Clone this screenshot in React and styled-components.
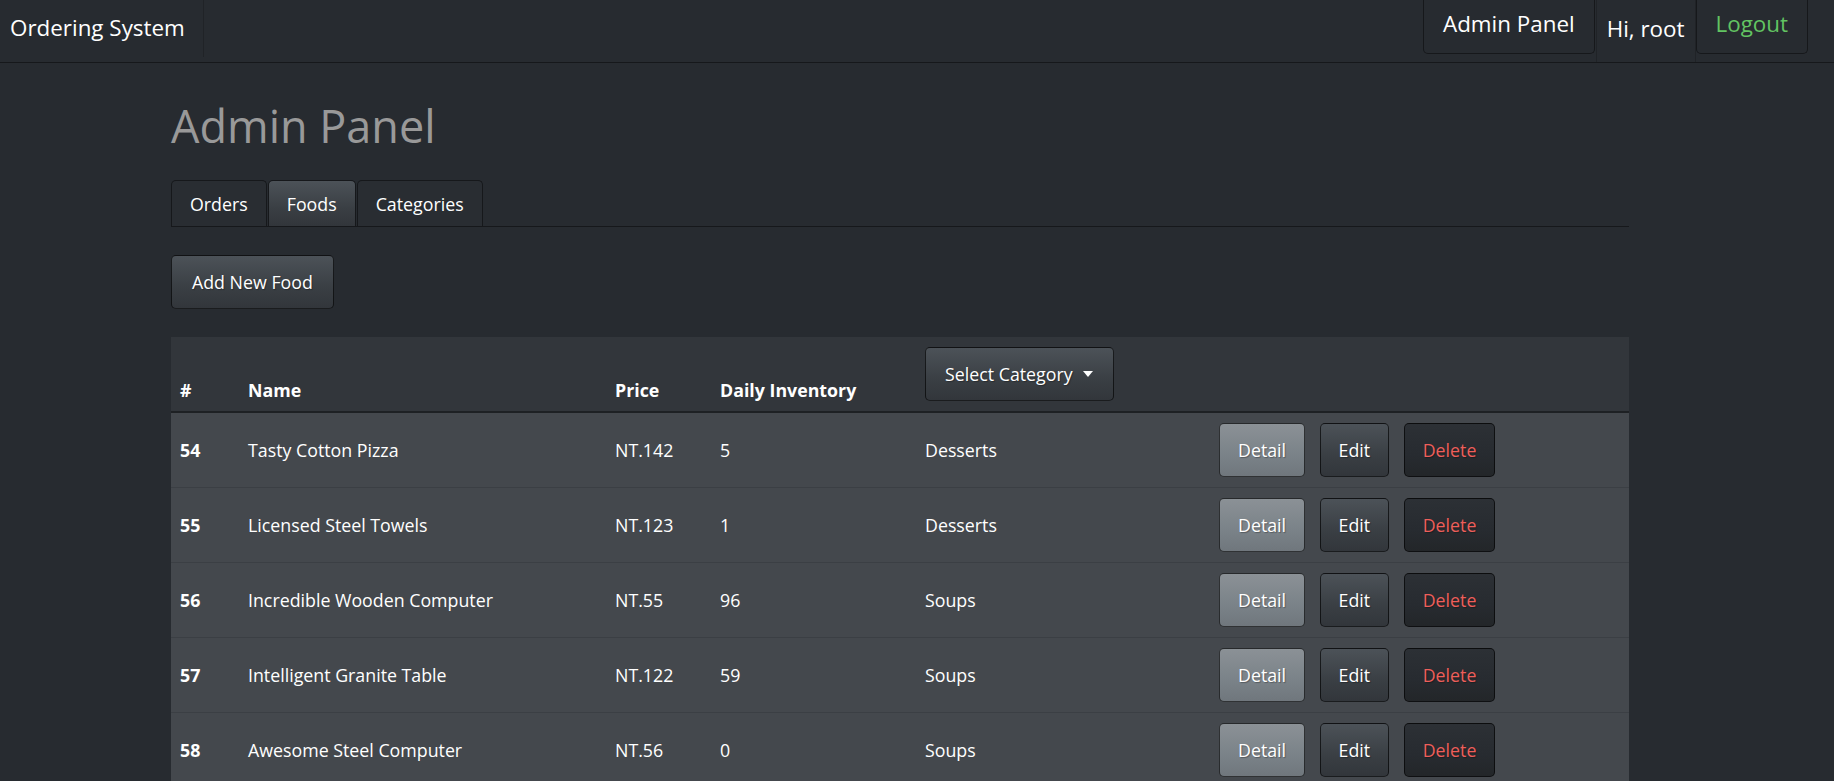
import React from "react";
import styled, { createGlobalStyle, css } from "styled-components";

const GlobalStyle = createGlobalStyle`
  html, body { margin: 0; padding: 0; }
  body {
    background: #272b30;
    color: #fff;
    font-family: "Open Sans", "Noto Sans", Arial, sans-serif;
    font-size: 17.8px;
    -webkit-font-smoothing: antialiased;
  }
  * { box-sizing: border-box; }
`;

const DARK_BORDER = "#16181b";

const Navbar = styled.nav`
  display: flex;
  align-items: flex-start;
  height: 63px;
  border-bottom: 1px solid ${DARK_BORDER};
  background: #272b30;
`;

const Brand = styled.a`
  display: flex;
  align-items: center;
  height: 57px;
  padding: 0 18px 2px 10px;
  border-right: 1px solid #202327;
  font-size: 22.4px;
  color: #fff;
  text-decoration: none;
`;

const NavRight = styled.div`
  margin-left: auto;
  display: flex;
  align-items: flex-start;
  padding-right: 26px;
`;

const NavLink = styled.a`
  display: flex;
  align-items: center;
  height: 54px;
  padding: 0 19px 6px;
  border: 1px solid ${DARK_BORDER};
  border-top: none;
  border-radius: 0 0 5px 5px;
  font-size: 22.4px;
  color: ${(p) => p.$color || "#fff"};
  text-decoration: none;
  margin-right: ${(p) => p.$gap || 0}px;
`;

const NavText = styled.span`
  display: flex;
  align-items: center;
  height: 62px;
  padding: 0 10px 6px;
  border-left: 1px solid #202327;
  border-right: 1px solid #202327;
  font-size: 22.4px;
  color: #fff;
`;

const Container = styled.main`
  width: 1458px;
  margin: 0 0 0 171px;
`;

const Title = styled.h1`
  margin: 36px 0 27px;
  font-size: 45px;
  font-weight: 400;
  line-height: 54px;
  color: #999;
`;

const Tabs = styled.div`
  display: flex;
  gap: 1px;
  border-bottom: 1px solid ${DARK_BORDER};
`;

const primaryGradient = css`
  background-image: linear-gradient(#4c5258, #3a3f44 60%, #32363b);
`;

const Tab = styled.a`
  display: flex;
  align-items: center;
  height: 46px;
  padding: 0 18px;
  border: 1px solid ${DARK_BORDER};
  border-bottom: none;
  border-radius: 5px 5px 0 0;
  color: #fff;
  text-decoration: none;
  background: #292d32;
  ${(p) => p.$active && primaryGradient}
`;

const Button = styled.button`
  display: inline-flex;
  align-items: center;
  height: 54px;
  padding: 0 18px;
  border: 1px solid rgba(0, 0, 0, 0.65);
  border-radius: 5px;
  font-family: inherit;
  font-size: 17.8px;
  color: #fff;
  text-shadow: 1px 1px 1px rgba(0, 0, 0, 0.3);
  cursor: pointer;
  ${primaryGradient}
  ${(p) =>
    p.$variant === "secondary" &&
    css`
      background-image: linear-gradient(#8b9196, #7a8288 60%, #70777d);
    `}
  ${(p) =>
    p.$variant === "dark" &&
    css`
      background-image: linear-gradient(#2c3035, #272b30 60%, #232629);
      color: #ee5f5b;
    `}
`;

const AddButton = styled(Button)`
  margin-top: 28px;
  padding: 0 20px;
`;

const DropdownButton = styled(Button)`
  padding: 0 20px 0 19px;
`;

const Caret = styled.span`
  display: inline-block;
  margin-left: 10px;
  width: 0;
  height: 0;
  border-top: 6px solid #fff;
  border-left: 5.5px solid transparent;
  border-right: 5.5px solid transparent;
`;

const Table = styled.table`
  width: 1458px;
  margin-top: 28px;
  border-collapse: separate;
  border-spacing: 0;
  table-layout: fixed;
`;

const HeadCell = styled.th`
  background: #32363b;
  padding: 10px 9px 7px;
  text-align: left;
  vertical-align: bottom;
  font-weight: 700;
  line-height: 28px;
  border-bottom: 2px solid #1e2124;
`;

const ControlHeadCell = styled(HeadCell)`
  padding: 10px 9px;
`;

const Row = styled.tr`
  background: #44484d;
  & + & td {
    border-top: 1px solid #3b3f44;
  }
`;

const Cell = styled.td`
  padding: 10px 9px;
  vertical-align: middle;
  line-height: 28px;
  font-weight: ${(p) => (p.$bold ? 700 : 400)};
`;

const Actions = styled.div`
  display: flex;
  gap: 14.5px;
`;

const foods = [
  { id: 54, name: "Tasty Cotton Pizza", price: 142, inv: 5, cat: "Desserts" },
  { id: 55, name: "Licensed Steel Towels", price: 123, inv: 1, cat: "Desserts" },
  { id: 56, name: "Incredible Wooden Computer", price: 55, inv: 96, cat: "Soups" },
  { id: 57, name: "Intelligent Granite Table", price: 122, inv: 59, cat: "Soups" },
  { id: 58, name: "Awesome Steel Computer", price: 56, inv: 0, cat: "Soups" },
];

export default function App() {
  return (
    <>
      <GlobalStyle />
      <Navbar>
        <Brand>Ordering System</Brand>
        <NavRight>
          <NavLink $gap={1}>Admin Panel</NavLink>
          <NavText>Hi, root</NavText>
          <NavLink $color="#62c462">Logout</NavLink>
        </NavRight>
      </Navbar>
      <Container>
        <Title>Admin Panel</Title>
        <Tabs>
          <Tab>Orders</Tab>
          <Tab $active>Foods</Tab>
          <Tab>Categories</Tab>
        </Tabs>
        <AddButton>Add New Food</AddButton>
        <Table>
          <colgroup>
            <col style={{ width: 68 }} />
            <col style={{ width: 367 }} />
            <col style={{ width: 105 }} />
            <col style={{ width: 205 }} />
            <col style={{ width: 294 }} />
            <col style={{ width: 419 }} />
          </colgroup>
          <thead>
            <tr>
              <HeadCell>#</HeadCell>
              <HeadCell>Name</HeadCell>
              <HeadCell>Price</HeadCell>
              <HeadCell>Daily Inventory</HeadCell>
              <ControlHeadCell>
                <DropdownButton>
                  Select Category
                  <Caret />
                </DropdownButton>
              </ControlHeadCell>
              <HeadCell />
            </tr>
          </thead>
          <tbody>
            {foods.map((f) => (
              <Row key={f.id}>
                <Cell $bold>{f.id}</Cell>
                <Cell>{f.name}</Cell>
                <Cell>NT.{f.price}</Cell>
                <Cell>{f.inv}</Cell>
                <Cell>{f.cat}</Cell>
                <Cell>
                  <Actions>
                    <Button $variant="secondary">Detail</Button>
                    <Button>Edit</Button>
                    <Button $variant="dark">Delete</Button>
                  </Actions>
                </Cell>
              </Row>
            ))}
          </tbody>
        </Table>
      </Container>
    </>
  );
}
